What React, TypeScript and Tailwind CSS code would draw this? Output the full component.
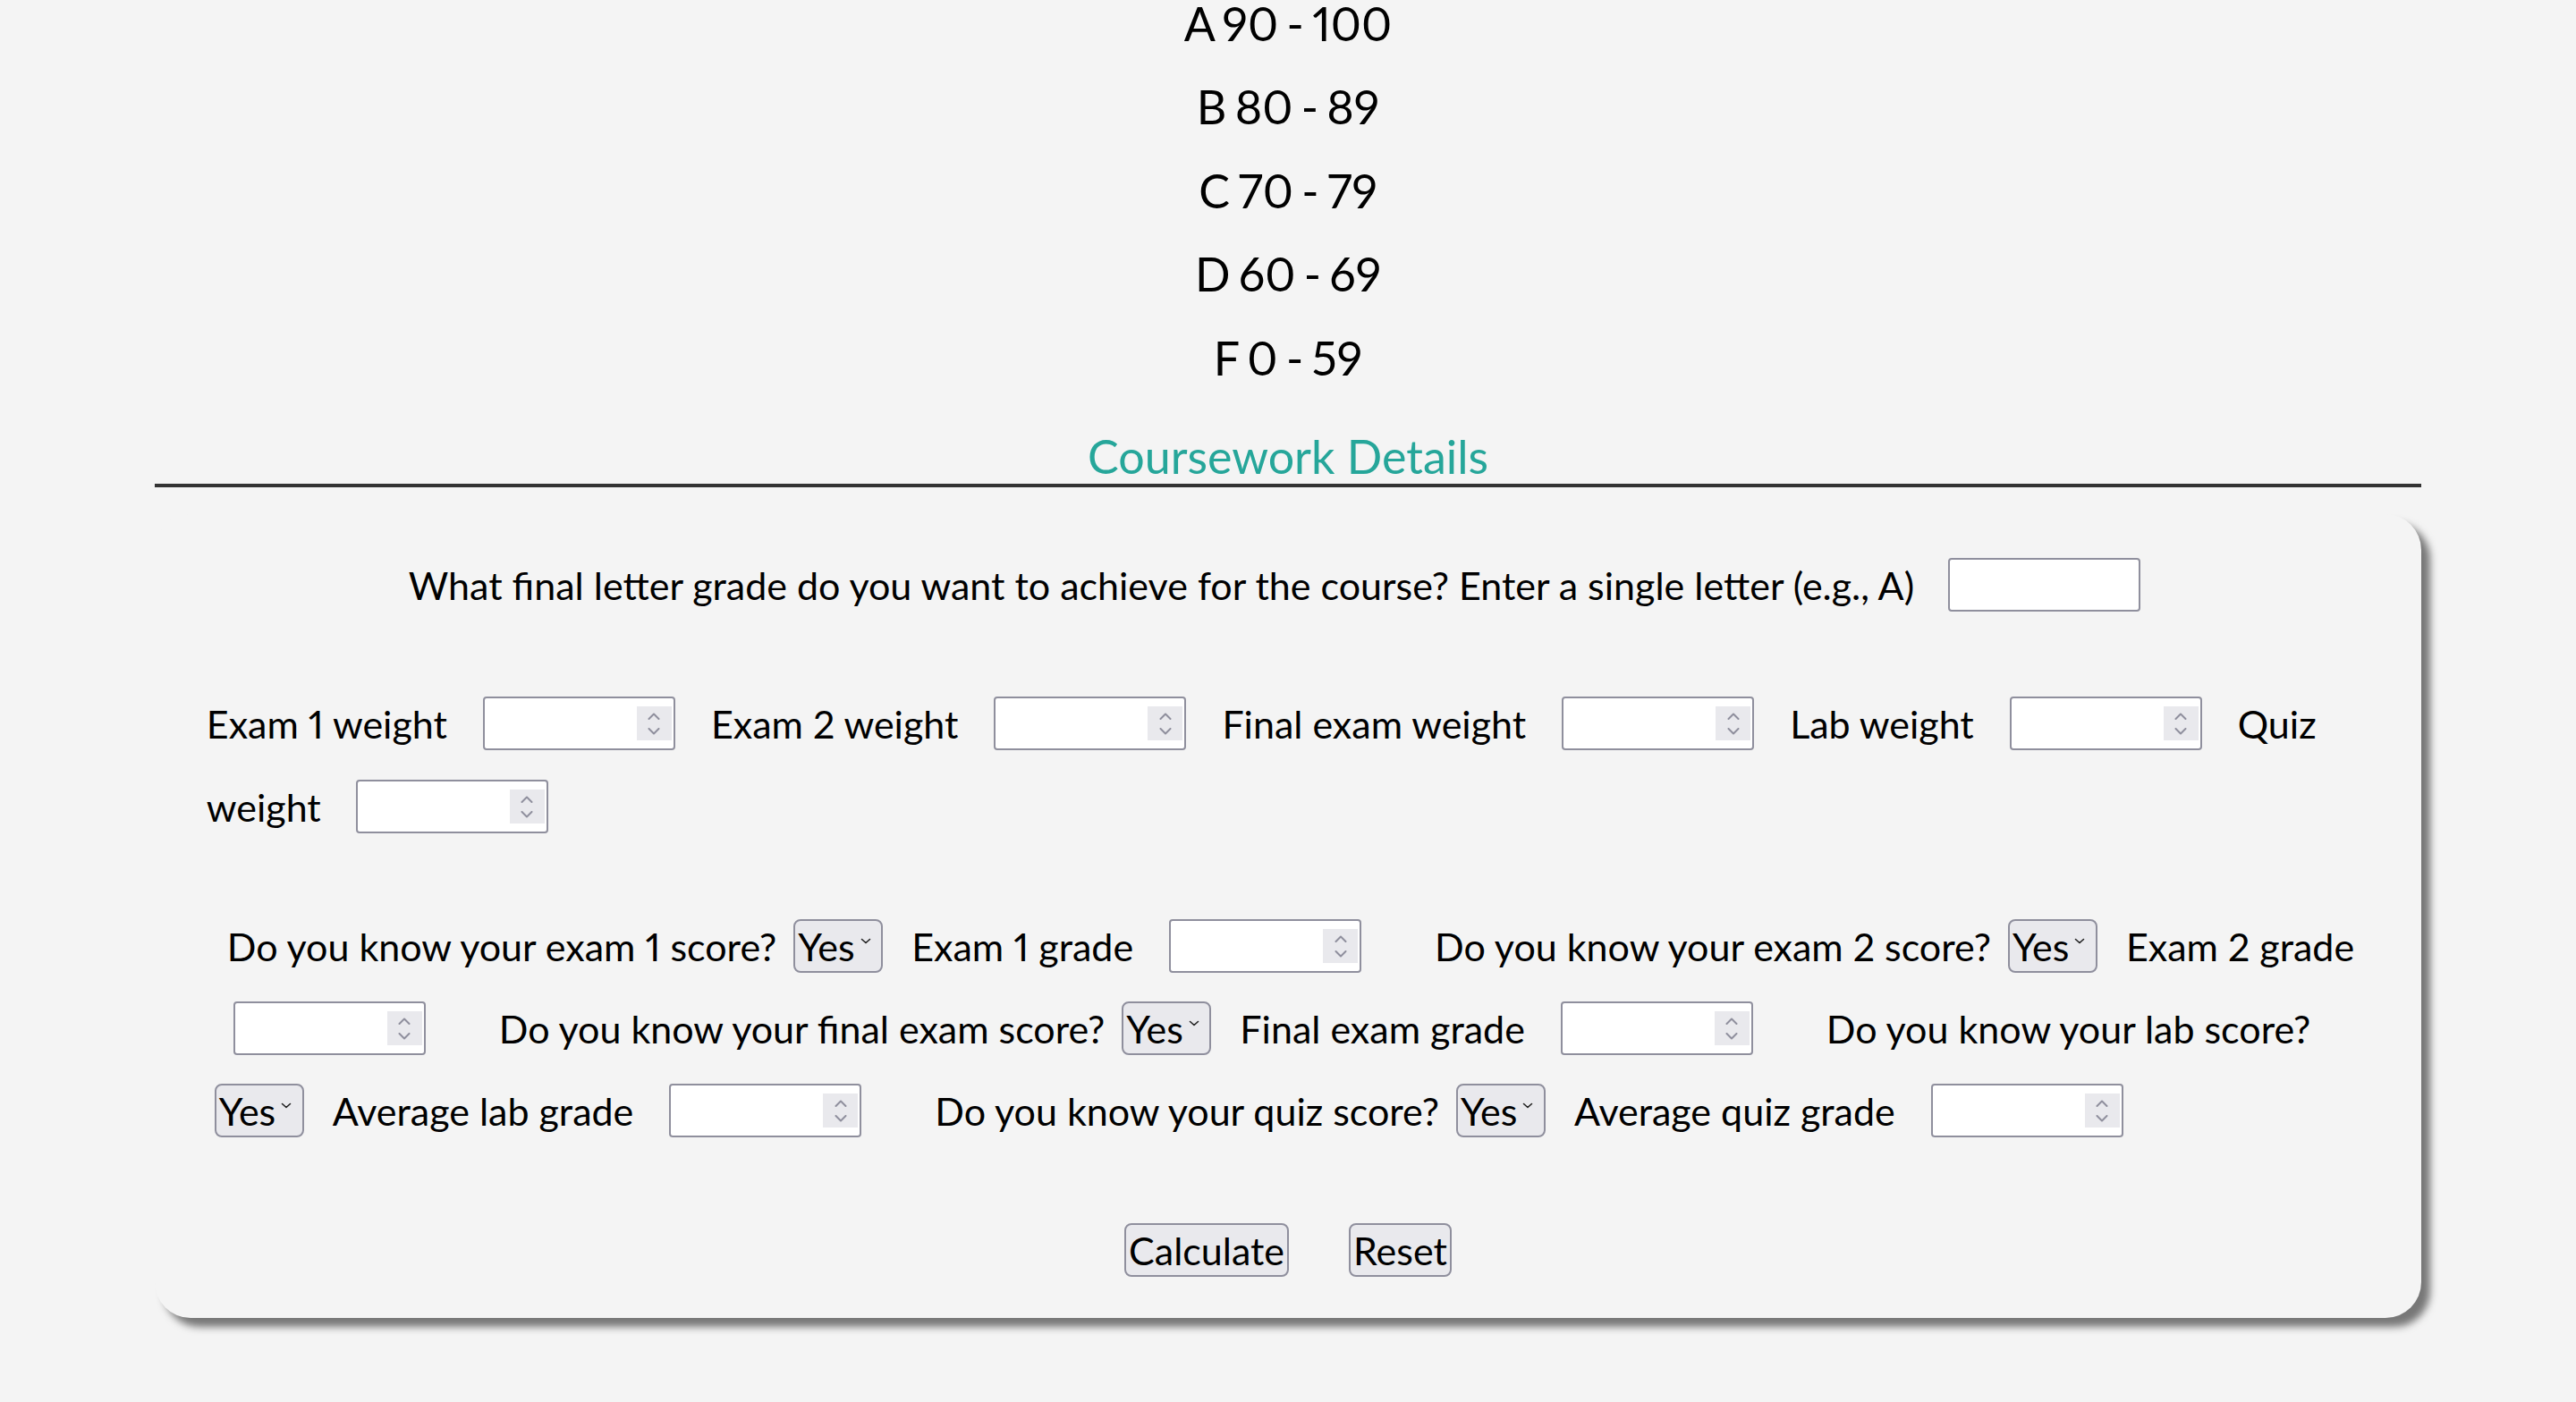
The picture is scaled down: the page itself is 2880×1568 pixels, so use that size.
import React from "react";

function Spinner() {
  return (
    <div className="absolute right-[2px] top-[9px] flex h-[38px] w-[39px] flex-col items-center justify-center gap-[9px] bg-[#e9e9ed]">
      <svg width="14" height="8" viewBox="0 0 14 8" fill="none">
        <path d="M1.5 7 L7 1.5 L12.5 7" stroke="#8f8f9d" strokeWidth="2" strokeLinecap="round" strokeLinejoin="round" />
      </svg>
      <svg width="14" height="8" viewBox="0 0 14 8" fill="none">
        <path d="M1.5 1 L7 6.5 L12.5 1" stroke="#8f8f9d" strokeWidth="2" strokeLinecap="round" strokeLinejoin="round" />
      </svg>
    </div>
  );
}

function NumInput({ className = "" }: { className?: string }) {
  return (
    <div className={"relative h-[60px] w-[215px] shrink-0 rounded-[4px] border-2 border-[#8f8f9d] bg-white " + className}>
      <Spinner />
    </div>
  );
}

function Sel({ className = "" }: { className?: string }) {
  return (
    <div className={"flex h-[60px] w-[100px] shrink-0 items-center rounded-[8px] border-2 border-[#8f8f9d] bg-[#e9e9ed] pl-[3px] " + className}>
      <span className="leading-none">Yes</span>
      <svg className="ml-[6px] mt-[-12px]" width="12" height="7" viewBox="0 0 12 7" fill="none">
        <path d="M1.5 1.5 L6 5.5 L10.5 1.5" stroke="#222" strokeWidth="1.6" strokeLinecap="round" strokeLinejoin="round" />
      </svg>
    </div>
  );
}

function L({ children, className = "" }: { children: React.ReactNode; className?: string }) {
  return <span className={"shrink-0 whitespace-nowrap " + className}>{children}</span>;
}

export default function App() {
  const grades = ["A 90 - 100", "B 80 - 89", "C 70 - 79", "D 60 - 69", "F 0 - 59"];
  return (
    <div className="min-h-screen overflow-hidden bg-[#f4f4f4] font-['Lato',sans-serif] text-black proportional-nums">
      <div className="mt-[-5px] flex flex-col items-center gap-[31px] text-[52px] leading-[1.2] [word-spacing:-4px]">
        {grades.map((g) => (
          <p key={g}>{g}</p>
        ))}
      </div>
      <div className="mx-auto mt-[48px] w-[88%] border-b-4 border-[#333] text-center text-[52px] leading-[1.2] text-[#26a69a]">
        Coursework Details
      </div>
      <div className="mx-auto mt-[30px] w-[88%] rounded-[40px] bg-[#f4f4f4] pb-[46px] pt-[49px] text-[43px] leading-[1.2] shadow-[10px_10px_8px_#777]">
        <div className="flex h-[60px] items-center justify-center">
          <L>What final letter grade do you want to achieve for the course? Enter a single letter (e.g., A)</L>
          <div className="ml-[38px] mr-[30px] h-[60px] w-[215px] shrink-0 rounded-[4px] border-2 border-[#8f8f9d] bg-white" />
        </div>

        <div className="mt-[95px] flex flex-col gap-[33px] pl-[58px]">
          <div className="flex h-[60px] items-center gap-[40px]">
            <L>Exam 1 weight</L>
            <NumInput />
            <L>Exam 2 weight</L>
            <NumInput />
            <L>Final exam weight</L>
            <NumInput />
            <L>Lab weight</L>
            <NumInput />
            <L>Quiz</L>
          </div>
          <div className="flex h-[60px] items-center gap-[39px]">
            <L>weight</L>
            <NumInput />
          </div>
        </div>

        <div className="mt-[96px] flex flex-col gap-[32px]">
          <div className="flex h-[60px] items-center pl-[81px]">
            <L>Do you know your exam 1 score?</L>
            <Sel className="ml-[19px]" />
            <L className="ml-[32px]">Exam 1 grade</L>
            <NumInput className="ml-[40px]" />
            <L className="ml-[82px]">Do you know your exam 2 score?</L>
            <Sel className="ml-[19px]" />
            <L className="ml-[32px]">Exam 2 grade</L>
          </div>
          <div className="flex h-[60px] items-center pl-[88px]">
            <NumInput />
            <L className="ml-[82px]">Do you know your final exam score?</L>
            <Sel className="ml-[19px]" />
            <L className="ml-[32px]">Final exam grade</L>
            <NumInput className="ml-[40px]" />
            <L className="ml-[82px]">Do you know your lab score?</L>
          </div>
          <div className="flex h-[60px] items-center pl-[67px]">
            <Sel />
            <L className="ml-[32px]">Average lab grade</L>
            <NumInput className="ml-[40px]" />
            <L className="ml-[82px]">Do you know your quiz score?</L>
            <Sel className="ml-[19px]" />
            <L className="ml-[32px]">Average quiz grade</L>
            <NumInput className="ml-[40px]" />
          </div>
        </div>

        <div className="mt-[96px] flex items-center justify-center gap-[67px]">
          <button className="h-[60px] rounded-[8px] border-2 border-[#8f8f9d] bg-[#e9e9ed] px-[3px] leading-none text-black">
            Calculate
          </button>
          <button className="h-[60px] rounded-[8px] border-2 border-[#8f8f9d] bg-[#e9e9ed] px-[3px] leading-none text-black">
            Reset
          </button>
        </div>
      </div>
    </div>
  );
}
